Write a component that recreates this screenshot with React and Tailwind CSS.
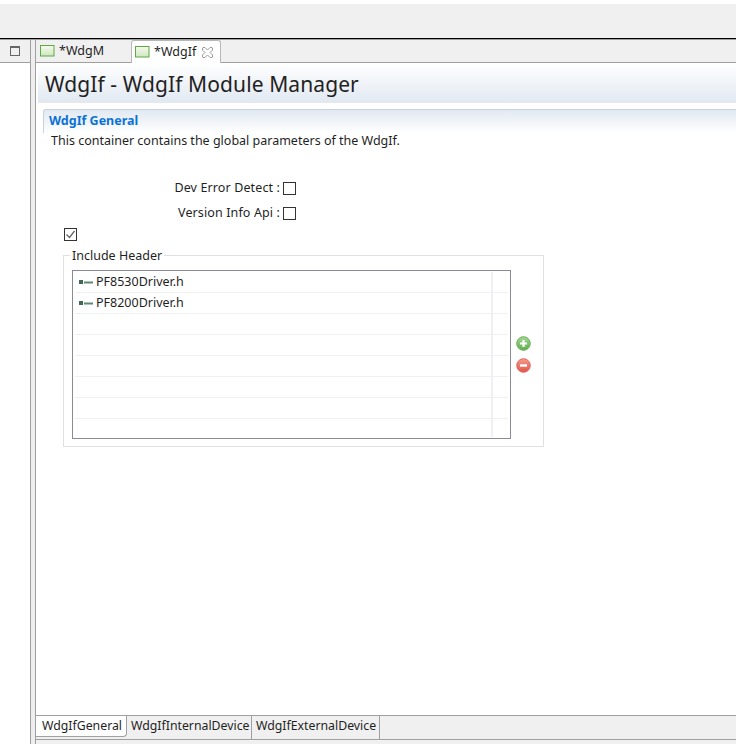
function Ed() {
  return (
    <svg width="15" height="12" viewBox="0 0 15 12" className="shrink-0">
      <defs>
        <linearGradient id="edg" x1="0" y1="0" x2="0" y2="1">
          <stop offset="0" stopColor="#f6faf0" />
          <stop offset="1" stopColor="#cfe6bd" />
        </linearGradient>
      </defs>
      <rect x="0.5" y="0.5" width="13.5" height="10.5" fill="url(#edg)" stroke="#5ea846" />
    </svg>
  );
}
const rows = ["PF8530Driver.h", "PF8200Driver.h", "", "", "", "", ""];
function Row({ t }) {
  return (
    <div className="h-[21px] flex border-b border-[#f0f0f0] mx-[2px]">
      <div className="w-[417px] flex items-center pl-[4px] pt-[2px] gap-[2px]">
        {t && (
          <svg width="15" height="6" viewBox="0 0 15 6" className="shrink-0">
            <rect x="0" y="0" width="4" height="4" fill="#3f6b50" />
            <rect x="5" y="1.5" width="9" height="2" fill="#5f8a70" />
          </svg>
        )}
        <span>{t}</span>
      </div>
    </div>
  );
}
export default function App() {
  return (
    <div className="w-[736px] h-[744px] bg-white overflow-hidden flex flex-col font-['Noto_Sans',sans-serif] text-[12.5px] text-[#1f1f1f]">
      <div className="h-[4px] bg-white" />
      <div className="h-[34px] bg-[#f0f0f0]" />
      <div className="h-[1px] bg-black" />
      <div className="h-[1px] bg-[#a0a0a0]" />
      <div className="flex-1 flex min-h-0">
        <div className="w-[31px] flex flex-col border-r border-[#a0a0a0]">
          <div className="h-[23px] bg-[#f0f0f0] border-b border-[#a0a0a0] flex items-center justify-end pr-[10px]">
            <div className="w-[10px] h-[10px] border border-[#666] border-t-2" />
          </div>
        </div>
        <div className="w-[4px] bg-[#eeeeee]" />
        <div className="flex-1 flex flex-col border-l border-[#a0a0a0] min-w-0">
          <div className="h-[23px] bg-[#f0f0f0] border-b border-[#a0a0a0] flex items-end shrink-0">
            <div className="w-[95px] h-[22px] flex items-center pl-[4px] gap-[4px]">
              <Ed /><span>*WdgM</span>
            </div>
            <div className="w-[90px] h-[23px] -mb-px bg-white border-x border-t border-[#b8b8b8] rounded-t-[3px] flex items-center pl-[3px] gap-[4px]">
              <Ed /><span>*WdgIf</span>
              <svg width="11" height="11" viewBox="0 0 11 11" className="ml-[2px] shrink-0">
                <path d="M1 .5 L3 .5 L5.5 3 L8 .5 L10 .5 L10.5 1 L10.5 3 L8 5.5 L10.5 8 L10.5 10 L10 10.5 L8 10.5 L5.5 8 L3 10.5 L1 10.5 L.5 10 L.5 8 L3 5.5 L.5 3 L.5 1 Z" fill="#fff" stroke="#9a9a9a" />
              </svg>
            </div>
          </div>
          <div className="flex-1 flex flex-col min-h-0 pl-[2px]">
            <div className="h-[40px] bg-gradient-to-b from-white to-[#e2e9f2] border-b border-[#e8e8e8] flex items-center pl-[7px] pt-[4px] text-[21px] text-[#222] tracking-[0.1px] shrink-0">
              WdgIf - WdgIf Module Manager
            </div>
            <div className="pl-[5px] mt-[6px] flex-1 min-h-0">
              <div className="h-[24px] border-t border-l border-[#c8d2dc] rounded-tl-[3px] bg-gradient-to-b from-[#e2e9f2] to-white flex items-center pl-[5px] pb-[1px] font-bold text-[#0a72d6]">
                WdgIf General
              </div>
              <div className="pl-[8px] mt-[-1px]">This container contains the global parameters of the WdgIf.</div>
              <div className="mt-[31px] flex flex-col gap-[12px] w-[253px] items-end">
                <div className="h-[13px] flex items-center gap-[3px]"><span className="pt-[1px] tracking-[0.12px]">Dev Error Detect :</span><div className="w-[13px] h-[13px] border border-[#333]" /></div>
                <div className="h-[13px] flex items-center gap-[3px]"><span className="pt-[1px] tracking-[0.12px]">Version Info Api :</span><div className="w-[13px] h-[13px] border border-[#333]" /></div>
              </div>
              <div className="ml-[21px] mt-[8px] w-[13px] h-[13px] border border-[#333] flex items-center justify-center">
                <svg width="11" height="11" viewBox="0 0 11 11"><path d="M1.5 5.5 L4.5 8.5 L9.5 2" fill="none" stroke="#666" strokeWidth="1.3" /></svg>
              </div>
              <div className="relative ml-[20px] mt-[14px] w-[481px] h-[192px] border border-[#e0e0e0] pl-[8px] pt-[14px]">
                <span className="absolute left-[6px] top-[-9px] bg-white px-[2px]">Include Header</span>
                <div className="relative w-[439px] h-[169px] border border-[#888a98] pt-[1px]">
                  {rows.map((t, i) => <Row key={i} t={t} />)}
                  <div className="absolute left-[418px] top-[1px] bottom-[1px] w-[2px] bg-[#eef0f5]" />
                </div>
                <div className="absolute left-[452px] top-[80px] flex flex-col gap-[7px]">
                  <svg width="15" height="15" viewBox="0 0 15 15">
                    <defs><linearGradient id="gp" x1="0" y1="0" x2="0" y2="1"><stop offset="0" stopColor="#a5d795" /><stop offset="1" stopColor="#5fae4c" /></linearGradient></defs>
                    <circle cx="7.5" cy="7.5" r="6.8" fill="url(#gp)" stroke="#6bae58" />
                    <path d="M7.5 4v7M4 7.5h7" stroke="#fff" strokeWidth="2.2" />
                  </svg>
                  <svg width="15" height="15" viewBox="0 0 15 15">
                    <defs><linearGradient id="gm" x1="0" y1="0" x2="0" y2="1"><stop offset="0" stopColor="#f59a8d" /><stop offset="1" stopColor="#e2554a" /></linearGradient></defs>
                    <circle cx="7.5" cy="7.5" r="6.8" fill="url(#gm)" stroke="#dc6a5c" />
                    <path d="M4 7.5h7" stroke="#fff" strokeWidth="2.4" />
                  </svg>
                </div>
              </div>
            </div>
          </div>
          <div className="h-[24px] flex shrink-0 border-t border-[#a0a0a0] bg-[#f0f0f0] text-[12.3px]">
            <div className="w-[91px] h-[21px] bg-white border-r border-b border-[#a0a0a0] pl-[6px] flex items-center rounded-br-[4px] shrink-0">WdgIfGeneral</div>
            <div className="w-[125px] pl-[4px] border-r border-[#a0a0a0] flex items-center pb-[3px] shrink-0">WdgIfInternalDevice</div>
            <div className="w-[128px] pl-[4px] border-r border-[#a0a0a0] flex items-center pb-[3px] shrink-0">WdgIfExternalDevice</div>
          </div>
          <div className="h-[1px] bg-[#a0a0a0] shrink-0" />
          <div className="h-[4px] bg-[#f0f0f0] shrink-0" />
        </div>
      </div>
    </div>
  );
}
